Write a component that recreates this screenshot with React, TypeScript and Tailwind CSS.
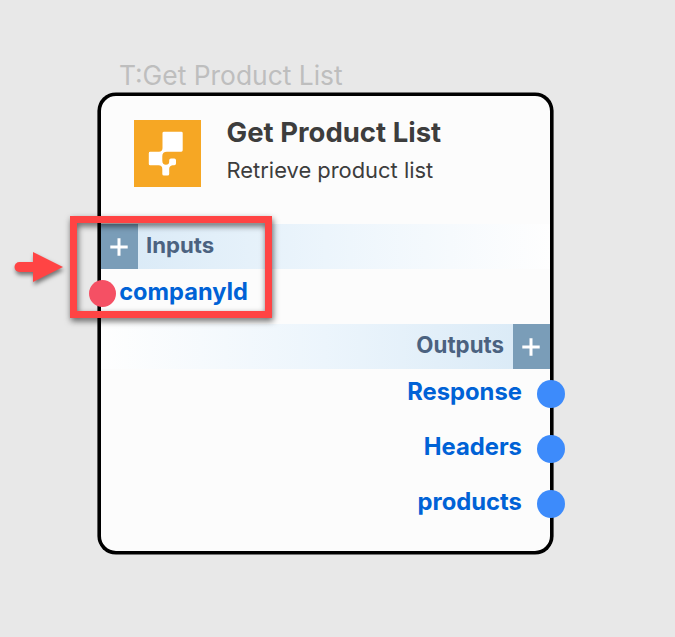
import type { ReactNode } from "react";

function Plus() {
  return (
    <div className="flex h-full w-[37px] shrink-0 items-center justify-center bg-[#7a9db8]">
      <svg width="18" height="18" viewBox="0 0 18 18" className="relative top-[0.5px] -left-[1px] block">
        <path d="M9 0.3V17.7M0.3 9H17.7" stroke="#fff" strokeWidth="3" />
      </svg>
    </div>
  );
}

function Dot({ color }: { color: string }) {
  return <span className={`block size-[27.6px] shrink-0 rounded-full ${color}`} />;
}

function Output({ children }: { children: ReactNode }) {
  return (
    <li className="flex h-[55px] items-center justify-end gap-[15px]">
      <span className="relative -top-[2px] text-[23.8px] leading-[30px] font-bold whitespace-nowrap text-[#0062d6]">{children}</span>
      <Dot color="bg-[#3d8bfb]" />
    </li>
  );
}

function Logo() {
  return (
    <svg width="67" height="67" viewBox="0 0 67 67" className="block shrink-0">
      <rect width="67" height="67" fill="#f6a724" />
      <path
        fill="#fff"
        d="M30 11.7H47.3Q48.7 11.7 48.7 13.1V30.3Q48.7 31.7 47.3 31.7H33Q28.3 31.7 28.3 36V40.5Q28.3 44.8 32 44.8Q35.2 44.8 35.2 41.5V40.2Q35.2 38.4 37 38.4H40.3Q42 38.4 42 40.2V43.6Q42 45.3 40.3 45.3H38.5Q35.2 45.8 35.2 49V53.9Q35.2 55.6 33.5 55.6H30Q28.3 55.6 28.3 53.9V49Q28.3 45.3 24.5 45.3H16.2Q14.8 45.3 14.8 43.9V33.2Q14.8 31.8 16.2 31.8H25Q28.5 31.5 28.5 28V13.1Q28.5 11.7 30 11.7Z"
      />
    </svg>
  );
}

export default function App() {
  return (
    <main className="relative h-[637px] w-[675px] overflow-hidden bg-[#e8e8e8] pt-[60px] pl-[98px] font-['Inter',sans-serif] [font-optical-sizing:none]">
      <div className="h-[33px] pl-[21px] text-[26.4px] leading-[31px] whitespace-nowrap text-[#bebebe]">T:Get Product List</div>
      <section className="h-[461px] w-[455px] rounded-[18px] border-[3px] border-black bg-[#fcfcfc] shadow-[0_0_0_0.6px_#000]">
        <header className="flex h-[128px] gap-[26px] pt-[24px] pl-[32.6px]">
          <Logo />
          <div className="whitespace-nowrap text-[#3d3d3d]">
            <h1 className="-mt-[5px] text-[27.5px] leading-[34px] font-bold">Get Product List</h1>
            <p className="mt-[7px] text-[21.9px] leading-[28px]">Retrieve product list</p>
          </div>
        </header>
        <div className="flex h-[45px] bg-linear-to-r from-[#d8e9f6] via-[#ecf5fc] to-[#fefefe]">
          <Plus />
          <span className="pt-[7px] pl-[8px] text-[22.2px] leading-[28px] font-bold text-[#4b6280]">Inputs</span>
        </div>
        <div className="-ml-[12.4px] flex h-[55px] items-start gap-[3px] pt-[10.5px]">
          <Dot color="bg-[#f55064]" />
          <span className="relative -top-[3px] text-[23.6px] leading-[30px] font-bold text-[#0062d6]">companyId</span>
        </div>
        <div className="flex h-[45px] justify-end bg-linear-to-l from-[#d8e9f6] via-[#ecf5fc] to-[#fefefe]">
          <span className="pt-[7px] pr-[9px] text-[22.3px] leading-[28px] font-bold text-[#4b6280]">Outputs</span>
          <Plus />
        </div>
        <ul className="-mt-[2.6px] -mr-[14.5px]">
          <Output>Response</Output>
          <Output>Headers</Output>
          <Output>products</Output>
        </ul>
      </section>
      <div className="absolute top-[216px] left-[70px] h-[102px] w-[202px] border-[7px] border-[#ff4444] drop-shadow-[1px_3px_3px_rgba(0,0,0,0.6)]" />
      <svg width="50" height="32" viewBox="0 0 50 32" className="absolute top-[251px] left-[13px] overflow-visible drop-shadow-[1px_3px_2px_rgba(0,0,0,0.5)]">
        <path d="M6.5 16H24" stroke="#ff4444" strokeWidth="10" strokeLinecap="round" />
        <path d="M20 1L50 16L20 31Z" fill="#ff4444" />
      </svg>
    </main>
  );
}
